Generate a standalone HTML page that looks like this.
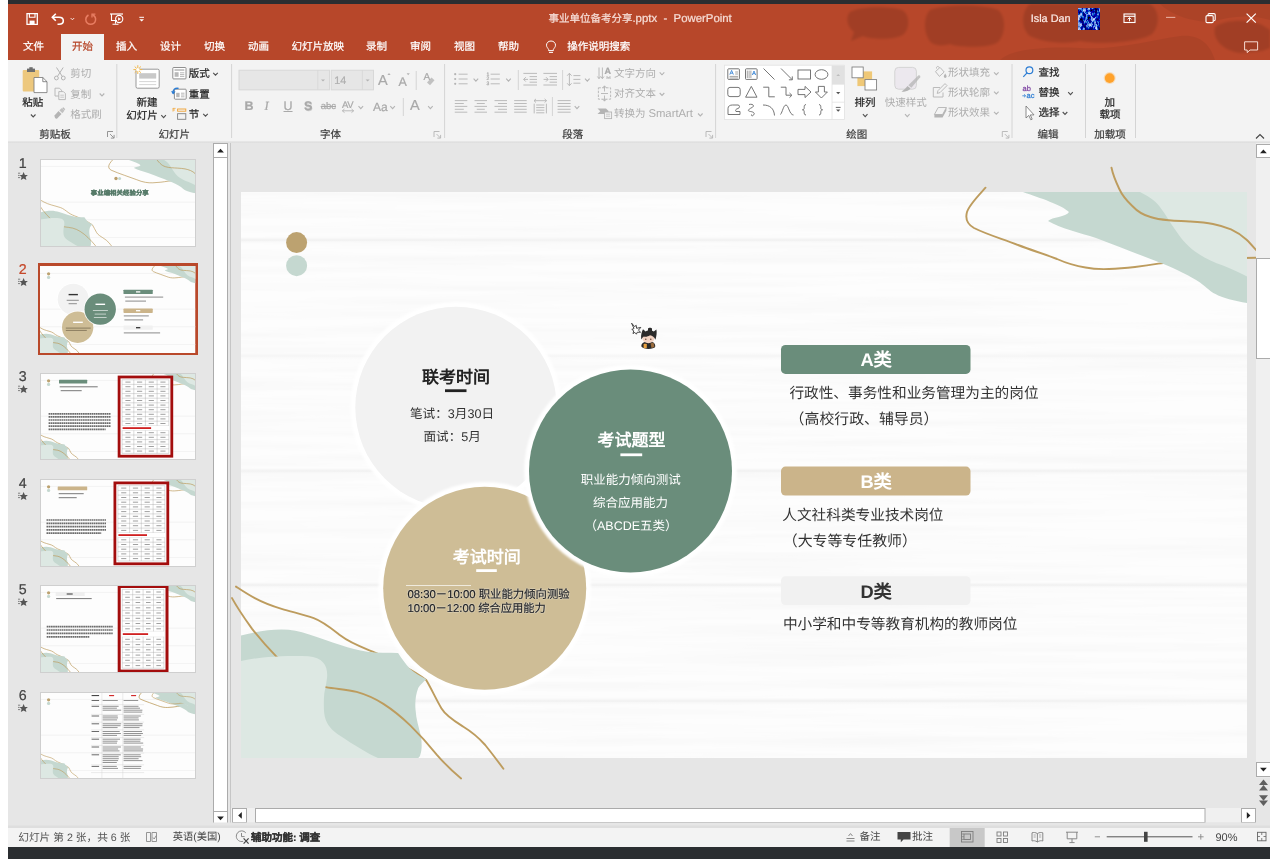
<!DOCTYPE html>
<html lang="zh-CN">
<head>
<meta charset="utf-8">
<title>事业单位备考分享.pptx - PowerPoint</title>
<style>
html,body{margin:0;padding:0}
body{width:1270px;height:859px;position:relative;overflow:hidden;background:#fff;font-family:"Liberation Sans",sans-serif;font-size:10.5px;color:#262626;text-rendering:geometricPrecision}
.a{position:absolute}
.t{position:absolute;white-space:nowrap;line-height:12px;height:12px;-webkit-text-stroke:0.22px currentColor}
.ns{-webkit-text-stroke:0 transparent}
.g{color:#adadad;-webkit-text-stroke:0 transparent}
.w{color:#fff}
svg{position:absolute;overflow:visible}
.sep{position:absolute;width:1px;background:#d2d2d2;top:64px;height:74px}
.gl{position:absolute;white-space:nowrap;line-height:12px;top:129px;color:#3c3c3c;-webkit-text-stroke:0.2px currentColor}
.st{position:absolute;white-space:nowrap;line-height:16px;color:#333;font-size:14.66px}
</style>
</head>
<body>
<div id="root" style="position:absolute;left:0;top:0;width:1270px;height:859px;will-change:transform">
<!-- window frame -->
<div class="a" style="left:8px;top:0;width:1262px;height:4px;background:#2b2e31"></div>
<div class="a" id="titlebar" style="left:8px;top:4px;width:1262px;height:56px;background:#b7472a;overflow:hidden">
<svg width="1262" height="56" viewBox="8 4 1262 56" style="left:0;top:0">
<g fill="#000" opacity=".115" style="filter:blur(1px)">
<path d="M850,12 C860,6 890,6 902,10 C910,14 910,28 904,34 C896,40 872,40 863,36 L851,41 L854,32 C846,26 846,16 850,12Z"/>
<path d="M930,10 C945,4 985,4 998,10 C1006,16 1006,34 998,42 C990,48 960,48 950,44 C940,47 932,45 929,40 C923,30 924,16 930,10Z"/>
<path d="M1030,4 L1150,4 C1160,10 1160,26 1152,34 C1140,42 1100,45 1080,41 C1060,45 1040,41 1030,36 C1020,28 1022,10 1030,4Z"/>
<path d="M1215,27 C1225,19 1250,19 1262,25 L1270,30 L1270,48 L1262,51 L1240,53 C1225,51 1212,41 1215,27Z"/>
</g>
<g fill="#000" opacity=".05">
<path d="M1000,60 C1010,50 1040,46 1080,48 C1120,50 1150,40 1180,36 C1200,34 1210,44 1215,60Z"/>
<path d="M1160,4 L1270,4 L1270,20 C1250,14 1230,16 1212,22 C1190,22 1170,14 1160,4Z"/>
</g>
</svg>
</div>
<div class="a" id="ribbon" style="left:8px;top:60px;width:1262px;height:82px;background:#f3f3f3"></div>
<div class="a" style="left:8px;top:141px;width:1262px;height:2px;background:linear-gradient(#e9e9e9,#dcdcdc)"></div>
<div class="a" id="work" style="left:8px;top:143px;width:1262px;height:685px;background:#e6e6e6"></div>
<div class="a" id="status" style="left:8px;top:828px;width:1262px;height:19px;background:#f3f3f3"></div>
<div class="a" style="left:8px;top:847px;width:1262px;height:12px;background:#2b2e31"></div>

<!--TITLEBAR_START-->
<!-- quick access -->
<svg style="left:26px;top:13px" width="120" height="12" viewBox="0 0 120 12">
<g fill="none" stroke="#fff" stroke-width="1.3">
<path d="M1,0.7H11.3V11.3H1Z"/><path d="M3.4,0.7V4.3H9V0.7" stroke-width="1.1"/><rect x="3.6" y="7.6" width="5" height="3.7" fill="#fff" stroke="none"/>
<path d="M26.5,4.3H33 C36.5,4.3 37.3,6.6 37.3,7.8 C37.3,9.6 36,11.3 33,11.3 H31.5" stroke-width="1.6"/><path d="M29.8,0.8L26.3,4.3L29.8,7.8" stroke-width="1.6"/>
<path d="M44.6,5L46.4,6.8L48.2,5" stroke-width="1" opacity=".85"/>
<path d="M66.5,1.5 C68.8,3 70,5 69.5,7.4 C69,9.8 67,11.3 64.7,11.3 C62,11.3 59.8,9.3 59.8,6.5 C59.800,4.5 60.800,3 62.500,2" stroke="#e87d62" stroke-width="1.5"/><path d="M66,4.600V1.2H69.400" stroke="#e87d62" stroke-width="1.3"/>
<path d="M84,1H97" stroke-width="1.200"/><path d="M85.500,1V7.500H91" stroke-width="1.1"/><circle cx="93.200" cy="6" r="3.600" stroke-width="1.100"/><path d="M92.100,4.300V7.700L95,6Z" fill="#fff" stroke="none"/><path d="M89.500,8V10.500M86.500,11.200H92.500" stroke-width="1.100"/>
<path d="M113.300,4.300H118" stroke-width="1"/><path d="M113.300,6.200H118L115.650,8.600Z" fill="#fff" stroke="none"/>
</g></svg>
<div class="t" style="left:548.4px;top:12.5px;color:#f6ddd6;font-size:10.500px">事业单位备考分享<span style="font-size:11.4px">.pptx&nbsp; -&nbsp; PowerPoint</span></div>
<div class="t" style="left:1030.7px;top:12.6px;color:#fbe9e4;font-size:10.900px">Isla Dan</div>
<!-- avatar -->
<svg style="left:1078px;top:8px;overflow:hidden" width="22" height="22" viewBox="0 0 22 22"><defs><filter id="av" x="0" y="0" width="100%" height="100%"><feTurbulence type="fractalNoise" baseFrequency="0.3 0.2" numOctaves="3" seed="7"/><feColorMatrix type="matrix" values="3 0 0 0 -1.6  3 0 0 0 -1.45  2.6 0 0 0 -0.74  0 0 0 0 1"/></filter></defs><rect width="22" height="22" fill="#1f37a8"/><rect width="22" height="22" filter="url(#av)" opacity=".95"/></svg>
<!-- window buttons -->
<svg style="left:1123px;top:13px" width="140" height="42" viewBox="1123 13 140 42">
<g fill="none" stroke="#fff" stroke-width="1.100">
<rect x="1124" y="14" width="11" height="8.500"/><path d="M1124,16.300H1135" /><path d="M1129.500,21.300V17.800M1127.600,19.400L1129.500,17.600L1131.400,19.400" stroke-width="1"/>
<path d="M1166,17.400H1175.300" stroke="#e6ab9b"/>
<rect x="1206" y="15.600" width="7.200" height="7" rx="1.200"/><path d="M1208,15.400V14.700Q1208,13.600 1209.100,13.600H1214Q1215.200,13.600 1215.200,14.800V19.600Q1215.200,20.700 1214,20.700H1213.400"/>
<path d="M1246.600,13.600L1255.800,22.600M1255.800,13.600L1246.600,22.600" stroke-width="1.200"/>
<path d="M1244.600,41.800H1257.600V50H1250L1247.200,52.600V50H1244.600Z" stroke="#f7d9d0" stroke-width="1"/>
</g></svg>
<!-- tabs -->
<div class="a" style="left:61px;top:34px;width:43px;height:26px;background:#f3f3f3"></div>
<div class="t w" style="left:23px;top:41px">文件</div>
<div class="t" style="left:72px;top:41px;color:#b7472a">开始</div>
<div class="t w" style="left:116px;top:41px">插入</div>
<div class="t w" style="left:160px;top:41px">设计</div>
<div class="t w" style="left:204px;top:41px">切换</div>
<div class="t w" style="left:248px;top:41px">动画</div>
<div class="t w" style="left:291.500px;top:41px">幻灯片放映</div>
<div class="t w" style="left:366px;top:41px">录制</div>
<div class="t w" style="left:410px;top:41px">审阅</div>
<div class="t w" style="left:454px;top:41px">视图</div>
<div class="t w" style="left:498px;top:41px">帮助</div>
<svg style="left:545px;top:40px" width="12" height="14" viewBox="0 0 12 14"><path d="M6,1 C3.200,1 1.500,3 1.500,5.200 C1.500,7 2.800,8 3.600,9.400 V10.600 H8.400 V9.400 C9.200,8 10.500,7 10.500,5.200 C10.500,3 8.800,1 6,1 Z M4,12.400H8" fill="none" stroke="#fff" stroke-width="1"/></svg>
<div class="t w" style="left:567.300px;top:41px">操作说明搜索</div>
<!--TITLEBAR_END-->
<!--RIBBON_START-->
<svg style="left:8px;top:60px" width="1262" height="82" viewBox="8 60 1262 82">
<g>
<rect x="22.7" y="70" width="16.5" height="21.5" rx="1" fill="#edc87e"/>
<rect x="27" y="68.6" width="8" height="3.4" fill="#6e6e6e"/><rect x="29.3" y="67.2" width="3.4" height="2.4" fill="#6e6e6e"/>
<path d="M34,77.500H42.800L47,81.700V92.600H34Z" fill="#fff" stroke="#7c7c7c" stroke-width="0.85"/><path d="M42.800,77.500V81.700H47" fill="none" stroke="#6e6e6e" stroke-width="0.8"/>
</g>
<path d="M30.9,114.5L33.2,116.9L35.5,114.5" fill="none" stroke="#505050" stroke-width="1.1"/>
<g fill="none" stroke="#b4b4b4" stroke-width="1"><path d="M56.5,67.500L62.300,76.500M63.200,67.500L57.400,76.500"/><circle cx="56.400" cy="78" r="1.900"/><circle cx="63.300" cy="78" r="1.900"/></g>
<g fill="#f3f3f3" stroke="#b4b4b4" stroke-width="0.9"><path d="M55,88.200H59.500L61.500,90.200V96H55Z"/><path d="M58.800,91.600H63.400L65.400,93.600V99.600H58.800Z"/><path d="M60.300,95.200H63.900M60.300,97.200H63.900" stroke-width="0.7"/></g>
<path d="M99.7,93.5L102.0,95.9L104.3,93.5" fill="none" stroke="#b4b4b4" stroke-width="1.1"/>
<g fill="#b4b4b4"><path d="M54.500,115.500L58.500,111L61.500,114L57.200,118.500C56,119.200 54.500,118.200 54.500,115.500Z"/><path d="M59.300,110.200L62,108L64.500,110.600L62.400,113.300Z" opacity=".8"/><path d="M62.800,107.600L64.800,109.600" stroke="#b4b4b4" stroke-width="1.200"/></g>
<path d="M107.5,137.0V131.5H113.0M110.1,134.1L113.8,137.8M114.1,134.9V138.1H110.9" fill="none" stroke="#8a8a8a" stroke-width="0.9"/>
<path d="M116.8,64V138" stroke="#d4d4d4" stroke-width="1"/>
<g>
<rect x="136" y="69.200" width="23.200" height="19" rx="1.500" fill="#fff" stroke="#808080" stroke-width="0.8"/>
<rect x="139.200" y="73.200" width="17" height="5.400" fill="#c8c8c8"/><path d="M139.200,81.600H156.200M139.200,84.600H156.200" stroke="#d0d0d0" stroke-width="0.9"/>
<path d="M137.800,65.200V74M133.400,69.600H142.200M134.700,66.500L140.900,72.700M140.900,66.500L134.700,72.700" stroke="#f2b84a" stroke-width="1"/><circle cx="137.800" cy="69.600" r="1.700" fill="#fff"/><rect x="133" y="64.500" width="4.800" height="4.300" fill="none"/>
</g>
<path d="M161.3,115.2L163.6,117.6L165.9,115.2" fill="none" stroke="#505050" stroke-width="1.1"/>
<g><rect x="172.800" y="67.500" width="13.200" height="11.400" rx="0.800" fill="#fff" stroke="#7c7c7c" stroke-width="0.85"/><path d="M174.500,70H184.300" stroke="#7c7c7c" stroke-width="0.85"/><rect x="174.600" y="72.200" width="4" height="4.600" fill="#b8b8b8"/><path d="M180,72.800H184.300M180,74.600H184.300M180,76.400H184.300" stroke="#9a9a9a" stroke-width="0.7"/></g>
<path d="M213.2,72.8L215.5,75.2L217.8,72.8" fill="none" stroke="#505050" stroke-width="1.1"/>
<g><rect x="174.400" y="89.200" width="11.800" height="10" rx="0.800" fill="#fff" stroke="#7c7c7c" stroke-width="0.85"/><rect x="176.200" y="92.800" width="3.400" height="4.400" fill="#b8b8b8"/><path d="M181,93.200H184.500M181,95H184.500M181,96.800H184.500" stroke="#9a9a9a" stroke-width="0.7"/><path d="M173,93.500C172.500,90 175,87.600 178.600,88.400" fill="none" stroke="#2b7cd3" stroke-width="1.300"/><path d="M171,91.300L173.200,94.400L175.600,91.600Z" fill="#2b7cd3"/></g>
<g fill="none"><path d="M173,108V111.600M173,108.400H175.600M173,110H175" stroke="#f0a840" stroke-width="0.8"/><rect x="177.600" y="109" width="8.200" height="2.200" stroke="#f0a030" stroke-width="0.9"/><rect x="177.600" y="113.700" width="8.200" height="5.600" stroke="#808080" stroke-width="0.9"/></g>
<path d="M203.2,113.8L205.5,116.2L207.8,113.8" fill="none" stroke="#505050" stroke-width="1.1"/>
<path d="M231.6,64V138" stroke="#d4d4d4" stroke-width="1"/>
<g><rect x="239" y="70.200" width="90.500" height="19.700" fill="#e6e6e6" stroke="#d6d6d6" stroke-width="0.9"/><path d="M317.800,70.200V89.900" stroke="#d6d6d6" stroke-width="0.8"/><path d="M321,79.400H325L323,81.600Z" fill="#b4b4b4"/>
<rect x="331.200" y="70.200" width="42.300" height="19.700" fill="#e6e6e6" stroke="#d6d6d6" stroke-width="0.9"/><path d="M362.400,70.200V89.900" stroke="#d6d6d6" stroke-width="0.8"/><path d="M365.600,79.400H369.600L367.600,81.600Z" fill="#b4b4b4"/></g>
<path d="M387.400,75L389,73L390.600,75Z" fill="#b4b4b4"/>
<path d="M406.600,73.300L408.200,75.300L409.800,73.300Z" fill="#b4b4b4"/>
<path d="M416.2,71V90" stroke="#d4d4d4" stroke-width="1"/>
<path d="M427,82.500L431.500,77.500L434.500,80.200L430,85.200Z" fill="#b4b4b4" opacity=".8"/>
<path d="M342.500,110.800H353.500M344.500,109L342.300,110.800L344.500,112.600M351.500,109L353.700,110.800L351.500,112.600" fill="none" stroke="#b4b4b4" stroke-width="0.9"/>
<path d="M358.5,106.2L360.8,108.6L363.1,106.2" fill="none" stroke="#b4b4b4" stroke-width="1.1"/>
<path d="M390.3,106.2L392.6,108.6L394.9,106.2" fill="none" stroke="#b4b4b4" stroke-width="1.1"/>
<path d="M403.3,98V116" stroke="#d4d4d4" stroke-width="1"/>
<path d="M428.1,106.2L430.4,108.6L432.7,106.2" fill="none" stroke="#b4b4b4" stroke-width="1.1"/>
<path d="M434,137.0V131.5H439.5M436.6,134.1L440.3,137.8M440.6,134.9V138.1H437.4" fill="none" stroke="#b4b4b4" stroke-width="0.9"/>
<path d="M444.6,64V138" stroke="#d4d4d4" stroke-width="1"/>
<circle cx="455.200" cy="74.2" r="1.100" fill="#b4b4b4"/>
<circle cx="455.200" cy="79.0" r="1.100" fill="#b4b4b4"/>
<circle cx="455.200" cy="83.8" r="1.100" fill="#b4b4b4"/>
<path d="M458.6,74.2H467.6M458.6,79.0H467.6M458.6,83.8H467.6" stroke="#b4b4b4" stroke-width="0.9" fill="none"/>
<path d="M473.6,78.7L475.9,81.1L478.2,78.7" fill="none" stroke="#b4b4b4" stroke-width="1.1"/>
<path d="M490.6,74.2H499.8M490.6,79.0H499.8M490.6,83.8H499.8" stroke="#b4b4b4" stroke-width="0.9" fill="none"/>
<path d="M506.2,78.7L508.5,81.1L510.8,78.7" fill="none" stroke="#b4b4b4" stroke-width="1.1"/>
<path d="M518.3,70V90" stroke="#d4d4d4" stroke-width="1"/>
<path d="M523.4,73.4H537.0" stroke="#b4b4b4" stroke-width="0.9" fill="none"/>
<path d="M529.6,76.6H537.0M529.6,79.4H537.0M529.6,82.2H537.0" stroke="#b4b4b4" stroke-width="0.9" fill="none"/>
<path d="M523.4,85.0H537.0" stroke="#b4b4b4" stroke-width="0.9" fill="none"/>
<path d="M528,79.400H523.800M525.800,77.200L523.600,79.400L525.800,81.600" fill="none" stroke="#b4b4b4" stroke-width="0.9"/>
<path d="M543.4,73.4H557.0" stroke="#b4b4b4" stroke-width="0.9" fill="none"/>
<path d="M549.6,76.6H557.0M549.6,79.4H557.0M549.6,82.2H557.0" stroke="#b4b4b4" stroke-width="0.9" fill="none"/>
<path d="M543.4,85.0H557.0" stroke="#b4b4b4" stroke-width="0.9" fill="none"/>
<path d="M543.600,79.400H548M546,77.200L548.200,79.400L546,81.600" fill="none" stroke="#b4b4b4" stroke-width="0.9"/>
<path d="M562.6,70V90" stroke="#d4d4d4" stroke-width="1"/>
<path d="M569.400,73.500V85.500M567.200,75.700L569.400,73.300L571.600,75.700M567.200,83.300L569.400,85.700L571.600,83.300" fill="none" stroke="#b4b4b4" stroke-width="0.9"/>
<path d="M573.4,75.6H580.4M573.4,79.4H580.4M573.4,83.2H580.4" stroke="#b4b4b4" stroke-width="0.9" fill="none"/>
<path d="M585.0,78.7L587.3,81.1L589.6,78.7" fill="none" stroke="#b4b4b4" stroke-width="1.1"/>
<path d="M454.8,100.6H467.3M454.8,103.5H463.8M454.8,106.4H467.3M454.8,109.3H463.8M454.8,112.2H467.3" stroke="#b4b4b4" stroke-width="0.9" fill="none"/>
<path d="M474.5,100.6H487.0M476.8,103.5H484.8M474.5,106.4H487.0M476.8,109.3H484.8M474.5,112.2H487.0" stroke="#b4b4b4" stroke-width="0.9" fill="none"/>
<path d="M494.5,100.6H507.0M498.0,103.5H507.0M494.5,106.4H507.0M498.0,109.3H507.0M494.5,112.2H507.0" stroke="#b4b4b4" stroke-width="0.9" fill="none"/>
<path d="M514.2,100.6H526.7M514.2,103.5H526.7M514.2,106.4H526.7M514.2,109.3H526.7M514.2,112.2H526.7" stroke="#b4b4b4" stroke-width="0.9" fill="none"/>
<path d="M534.200,100.700H546.400M536,98.900L534,100.700L536,102.500M544.600,98.900L546.600,100.700L544.600,102.500" fill="none" stroke="#b4b4b4" stroke-width="0.9"/>
<path d="M534.200,103.700V113.400M546.400,103.700V113.400" stroke="#b4b4b4" stroke-width="0.9"/>
<path d="M536.2,105.0H544.4M536.2,107.6H544.4M536.2,110.2H544.4M536.2,112.8H544.4" stroke="#b4b4b4" stroke-width="0.9" fill="none"/>
<path d="M552.4,97V116" stroke="#d4d4d4" stroke-width="1"/>
<path d="M557.6,100.6H570.6M557.6,103.5H570.6M557.6,106.4H570.6M557.6,109.3H570.6M557.6,112.2H570.6" stroke="#b4b4b4" stroke-width="0.9" fill="none"/>
<path d="M574.7,106.2L577.0,108.6L579.3,106.2" fill="none" stroke="#b4b4b4" stroke-width="1.1"/>
<path d="M599,67.500V78.500M602.400,67.500V78.500M597.400,76.500L599,78.700L600.600,76.500M600.800,76.500L602.400,78.700L604,76.500M606,78H611M606.600,76L608.500,78.200L610.400,76" fill="none" stroke="#b4b4b4" stroke-width="0.9"/>
<path d="M659.7,72.4L662.0,74.8L664.3,72.4" fill="none" stroke="#b4b4b4" stroke-width="1.1"/>
<g fill="none" stroke="#b4b4b4" stroke-width="0.9"><rect x="598.400" y="87.800" width="12.200" height="11.400" stroke-dasharray="2.5 1.3"/><path d="M604.500,86V91.500M602.600,88L604.500,85.800L606.400,88M604.500,101V95.500M602.600,99L604.500,101.200L606.400,99M601,93.500H608"/></g>
<path d="M659.7,93.0L662.0,95.4L664.3,93.0" fill="none" stroke="#b4b4b4" stroke-width="1.1"/>
<g><path d="M597.500,108.500H606L608.800,111.300L606,114H597.500L600.300,111.300Z" fill="#b4b4b4"/><rect x="604.600" y="112" width="7" height="6.600" fill="#f3f3f3" stroke="#b4b4b4" stroke-width="0.9"/><path d="M606,114.200H610.200M606,116.200H610.200" stroke="#b4b4b4" stroke-width="0.7"/></g>
<path d="M698.0,113.5L700.3,115.9L702.6,113.5" fill="none" stroke="#b4b4b4" stroke-width="1.1"/>
<path d="M706,137.0V131.5H711.5M708.6,134.1L712.3,137.8M712.6,134.9V138.1H709.4" fill="none" stroke="#b4b4b4" stroke-width="0.9"/>
<path d="M715.6,64V138" stroke="#d4d4d4" stroke-width="1"/>
<rect x="724.600" y="65.200" width="120" height="54.200" fill="#fff" stroke="#e2e2e2" stroke-width="0.8"/>
<rect x="832" y="65.600" width="12.300" height="18.600" fill="#e1e1e1"/><path d="M832,84.200H844.300M832,102.200H844.300M832,65.600V119.200" stroke="#e2e2e2" stroke-width="0.8" fill="none"/>
<path d="M836.300,76L838.200,74L840.100,76Z" fill="#bdbdbd"/><path d="M836.100,92L838.200,94.300L840.300,92Z" fill="#555"/><path d="M835.800,107.400H840.600" stroke="#555" stroke-width="0.9"/><path d="M836,109.400L838.200,111.800L840.400,109.400Z" fill="#555"/>
<g fill="none" stroke="#666" stroke-width="0.9">
<rect x="727.800" y="68.800" width="11.600" height="10.600" rx="0.800"/><path d="M735.200,72H738M735.200,74H738M729.600,76.400H738M729.600,78H738" stroke-width="0.6"/>
<rect x="745.500" y="68.800" width="11.600" height="10.600" rx="0.800"/><path d="M747.300,70.600V78M749.100,70.600V78M750.900,70.600V78" stroke-width="0.6"/>
<path d="M763.500,68.500L774.500,79.500"/>
<path d="M781,68.500L792,79.500M792.300,76.400V79.800H788.900" />
<rect x="798" y="70" width="12.500" height="9"/>
<ellipse cx="821.500" cy="74.500" rx="6.400" ry="4.800"/>
<rect x="727.800" y="87.400" width="12.400" height="9.200" rx="2.200"/>
<path d="M751.300,86.400L745.600,97.200H757Z"/>
<path d="M763.200,87.200H768.800V96.800H774.800"/>
<path d="M780.800,87.200H786V95.200H791.500M789.500,93L791.900,95.300L789.500,97.600"/>
<path d="M798,89.400H805V86.400L811,92L805,97.600V94.600H798Z"/>
<path d="M818.400,86.400H824.400V92H827.400L821.400,98L815.400,92H818.400Z"/>
<path d="M728,114.500V108.500C728,106 730,105 732.500,105H738C740,105 740,108 738,108.500C736,109 735,110 736,111.500H740V114.500Z"/>
<path d="M749,104.500C753,103.500 755,106 752,107.500C748,109.500 747,111 750.500,111.500C754,112 755.500,113.500 753,115.500C752,116.300 751,115.500 751.500,114.500"/>
<path d="M763,105C770,105 774,108.500 774.500,115.500"/>
<path d="M780.500,114.500C782.500,112 783.500,105 786,105C788.500,105 789.500,115 793.500,115"/>
</g>
<g fill="none" stroke="#666" stroke-width="0.9"><path d="M806,104.600C804,104.600 804.200,106.400 804.200,107.800C804.200,109.200 803.600,109.800 802.400,109.800C803.600,109.800 804.200,110.400 804.200,111.800C804.200,113.200 804,115 806,115"/><path d="M819,104.600C821,104.600 820.800,106.400 820.800,107.800C820.800,109.200 821.400,109.800 822.600,109.800C821.400,109.800 820.800,110.400 820.800,111.800C820.800,113.200 821,115 819,115"/></g>
<path d="M729.800,74.600L731.600,70.400L733.400,74.600M730.500,73.200H732.700" fill="none" stroke="#2b7cd3" stroke-width="0.8"/><path d="M752.300,75L754,71L755.700,75M753,73.700H755" fill="none" stroke="#2b7cd3" stroke-width="0.8"/>
<g><rect x="857.400" y="71.400" width="14.700" height="14.700" fill="#efc877"/><rect x="852" y="67" width="11.200" height="10.800" fill="#fff" stroke="#7c7c7c" stroke-width="0.85"/><rect x="865" y="79.600" width="11.600" height="10.400" fill="#fff" stroke="#7c7c7c" stroke-width="0.85"/></g>
<path d="M862.9,114.2L865.2,116.6L867.5,114.2" fill="none" stroke="#505050" stroke-width="1.1"/>
<g><rect x="894.800" y="67.400" width="21.600" height="21.800" rx="3.800" fill="#ece8ee" stroke="#d0d0d0" stroke-width="0.9"/><path d="M901.500,91.400C903.500,90.500 905.500,88.500 907.500,86L910.600,88.600C908.500,91 905.500,92.300 901.500,91.400Z" fill="#b4b4b4"/><path d="M908.300,85.200L911.400,87.800L920.200,77.200C920.800,76 919.400,74.800 918.300,75.600Z" fill="#b4b4b4" opacity=".75"/></g>
<path d="M905.0,114.2L907.3,116.6L909.6,114.2" fill="none" stroke="#b4b4b4" stroke-width="1.1"/>
<g fill="none" stroke="#b4b4b4" stroke-width="0.9"><path d="M935.500,71.600L940,67.400L944.200,72L939.400,76.400Z"/><path d="M936.500,68.500C936,66.500 938.500,65.500 939,67.500"/><path d="M945.200,73.600C945.200,73.600 943.800,75.600 943.800,76.600C943.800,78.400 946.600,78.400 946.600,76.600C946.600,75.600 945.200,73.600 945.200,73.600Z" fill="#b4b4b4" stroke="none"/></g>
<path d="M994.0,72.3L996.3,74.7L998.6,72.3" fill="none" stroke="#b4b4b4" stroke-width="1.1"/>
<g fill="none" stroke="#b4b4b4" stroke-width="0.9"><path d="M940,87.500H933.300V97H943V92.500"/><path d="M937.200,93.400L938,90.600L945,83.600L947,85.600L940,92.600Z"/></g>
<path d="M994.0,91.6L996.3,94.0L998.6,91.6" fill="none" stroke="#b4b4b4" stroke-width="1.1"/>
<g><path d="M934.400,114.500L938.200,107.500H946.400L942.600,114.500Z" fill="#f3f3f3" stroke="#b4b4b4" stroke-width="0.9"/><path d="M934.400,114.500H942.600L946.400,107.500V110.500L942.600,117.500H934.400Z" fill="#b4b4b4"/></g>
<path d="M994.0,111.8L996.3,114.2L998.6,111.8" fill="none" stroke="#b4b4b4" stroke-width="1.1"/>
<path d="M1002.3,137.0V131.5H1007.8M1004.9,134.1L1008.5999999999999,137.8M1008.9,134.9V138.1H1005.6999999999999" fill="none" stroke="#b4b4b4" stroke-width="0.9"/>
<path d="M1012,64V138" stroke="#d4d4d4" stroke-width="1"/>
<g fill="none" stroke="#2b7cd3" stroke-width="1.200"><circle cx="1029.400" cy="70.300" r="3.400"/><path d="M1027,72.800L1023.300,76.800"/></g>
<path d="M1022.300,95.800H1025.400M1024,94.300L1025.600,95.800L1024,97.300" fill="none" stroke="#2b7cd3" stroke-width="0.8"/>
<path d="M1068.2,92.2L1070.5,94.6L1072.8,92.2" fill="none" stroke="#505050" stroke-width="1.1"/>
<path d="M1026,106V118L1028.800,115.400L1030.800,119.800L1032.200,119.200L1030.300,114.900H1034Z" fill="#fff" stroke="#6e6e6e" stroke-width="0.8"/>
<path d="M1062.7,112.0L1065.0,114.4L1067.3,112.0" fill="none" stroke="#505050" stroke-width="1.1"/>
<path d="M1085.5,64V138" stroke="#d4d4d4" stroke-width="1"/>
<circle cx="1109.700" cy="78.100" r="4.900" fill="#ff9a1a"/><circle cx="1109.700" cy="78.100" r="6" fill="#ffb24d" opacity=".35"/>
<path d="M1135.5,64V138" stroke="#d4d4d4" stroke-width="1"/>
<path d="M1256,138.500L1260,134.500L1264,138.500" fill="none" stroke="#444" stroke-width="1.100"/>
</svg>
<div class="t " style="left:22.3px;top:97.0px;">粘贴</div>
<div class="t g" style="left:70.3px;top:68.0px;">剪切</div>
<div class="t g" style="left:70.3px;top:88.5px;">复制</div>
<div class="t g" style="left:70.3px;top:108.9px;">格式刷</div>
<div class="gl" style="left:39.3px">剪贴板</div>
<div class="t " style="left:136.5px;top:96.6px;">新建</div>
<div class="t " style="left:126.3px;top:110.2px;">幻灯片</div>
<div class="t " style="left:188.7px;top:68.0px;">版式</div>
<div class="t " style="left:188.7px;top:88.5px;">重置</div>
<div class="t " style="left:188.7px;top:108.9px;">节</div>
<div class="gl" style="left:158.4px">幻灯片</div>
<div class="t" style="left:334.3px;top:74.6px;color:#b0b0b0;font-size:10.800px">14</div>
<div class="t" style="left:378px;top:73.300px;color:#a9a9a9;font-size:14.500px;line-height:16px;height:16px">A</div>
<div class="t" style="left:398.500px;top:74.500px;color:#a9a9a9;font-size:12.500px;line-height:14px;height:14px">A</div>
<div class="t" style="left:423.500px;top:72px;color:#a9a9a9;font-size:10px">A</div>
<div class="t" style="left:244.500px;top:99.400px;color:#a9a9a9;font-size:12.500px;font-weight:bold;line-height:14px;height:14px">B</div>
<div class="t" style="left:264.500px;top:99.400px;color:#a9a9a9;font-size:12.500px;font-style:italic;line-height:14px;height:14px;font-family:'Liberation Serif',serif">I</div>
<div class="t" style="left:283.500px;top:99.400px;color:#a9a9a9;font-size:12.500px;line-height:14px;height:14px;text-decoration:underline">U</div>
<div class="t" style="left:304px;top:99.400px;color:#a9a9a9;font-size:12.500px;font-weight:bold;line-height:14px;height:14px;text-shadow:0.6px 0.6px 0 #ccc">S</div>
<div class="t" style="left:320.700px;top:101.400px;color:#a9a9a9;font-size:9.500px;text-decoration:line-through">abc</div>
<div class="t" style="left:342px;top:99.700px;color:#a9a9a9;font-size:9.500px;letter-spacing:-0.5px">AV</div>
<div class="t" style="left:373px;top:100px;color:#a9a9a9;font-size:12px;line-height:14px;height:14px">Aa</div>
<div class="t" style="left:410px;top:97.500px;color:#a9a9a9;font-size:14.500px;line-height:16px;height:16px">A</div>
<div class="gl" style="left:320px">字体</div>
<div class="t" style="left:486.500px;top:72.600px;color:#a9a9a9;font-size:5px;line-height:4.800px;height:15px;white-space:pre">1
2
3</div>
<div class="t" style="left:604.500px;top:64.500px;color:#a9a9a9;font-size:9px;font-weight:bold">A</div>
<div class="t g" style="left:614px;top:67.5px;">文字方向</div>
<div class="t g" style="left:614px;top:88.1px;">对齐文本</div>
<div class="t g" style="left:614px;top:107.900px">转换为 <span style="font-size:11.300px">SmartArt</span></div>
<div class="gl" style="left:562.2px">段落</div>
<div class="t " style="left:854.6px;top:96.9px;">排列</div>
<div class="t g" style="left:884.8px;top:96.9px;">快速样式</div>
<div class="t g" style="left:947.9px;top:67.4px;">形状填充</div>
<div class="t g" style="left:947.9px;top:86.7px;">形状轮廓</div>
<div class="t g" style="left:947.9px;top:106.9px;">形状效果</div>
<div class="gl" style="left:846.3px">绘图</div>
<div class="t " style="left:1038.5px;top:66.9px;">查找</div>
<div class="t" style="left:1022.500px;top:85.300px;font-size:7.500px;line-height:8px;height:8px;color:#7a3fa0">ab</div>
<div class="t" style="left:1026.500px;top:91.500px;font-size:7.500px;line-height:8px;height:8px;color:#2b7cd3">ac</div>
<div class="t " style="left:1038.5px;top:87.2px;">替换</div>
<div class="t " style="left:1038.5px;top:107.0px;">选择</div>
<div class="gl" style="left:1037.4px">编辑</div>
<div class="t " style="left:1104.6px;top:96.7px;">加</div>
<div class="t " style="left:1099.6px;top:109.2px;">载项</div>
<div class="gl" style="left:1094.300px">加载项</div>
<!--RIBBON_END-->
<!--THUMBS_START-->
<div class="t" style="left:18.800px;top:155.6px;font-size:14.200px;line-height:16px;height:16px;color:#444">1</div>
<svg style="left:17.600px;top:171.9px" width="10" height="8" viewBox="0 0 10 8"><path d="M0,1.200H2.200M0,3.400H1.600M0,5.600H2.200" stroke="#666" stroke-width="0.8" fill="none"/><path d="M5.600,0L6.900,2.900L9.900,3.100L7.600,5L8.400,8L5.600,6.400L2.800,8L3.600,5L1.600,3.100L4.300,2.900Z" fill="#555"/></svg>
<div class="t" style="left:18.800px;top:261.8px;font-size:14.200px;line-height:16px;height:16px;color:#c5482a">2</div>
<svg style="left:17.600px;top:278.1px" width="10" height="8" viewBox="0 0 10 8"><path d="M0,1.200H2.200M0,3.400H1.600M0,5.600H2.200" stroke="#666" stroke-width="0.8" fill="none"/><path d="M5.600,0L6.900,2.900L9.900,3.100L7.600,5L8.400,8L5.600,6.400L2.800,8L3.600,5L1.600,3.100L4.300,2.900Z" fill="#555"/></svg>
<div class="t" style="left:18.800px;top:368.8px;font-size:14.200px;line-height:16px;height:16px;color:#444">3</div>
<svg style="left:17.600px;top:385.1px" width="10" height="8" viewBox="0 0 10 8"><path d="M0,1.200H2.200M0,3.400H1.600M0,5.600H2.200" stroke="#666" stroke-width="0.8" fill="none"/><path d="M5.600,0L6.900,2.900L9.900,3.100L7.600,5L8.400,8L5.600,6.400L2.800,8L3.600,5L1.600,3.100L4.300,2.900Z" fill="#555"/></svg>
<div class="t" style="left:18.800px;top:475.6px;font-size:14.200px;line-height:16px;height:16px;color:#444">4</div>
<svg style="left:17.600px;top:491.9px" width="10" height="8" viewBox="0 0 10 8"><path d="M0,1.200H2.200M0,3.400H1.600M0,5.600H2.200" stroke="#666" stroke-width="0.8" fill="none"/><path d="M5.600,0L6.900,2.900L9.900,3.100L7.600,5L8.400,8L5.600,6.400L2.800,8L3.600,5L1.600,3.100L4.300,2.900Z" fill="#555"/></svg>
<div class="t" style="left:18.800px;top:581.7px;font-size:14.200px;line-height:16px;height:16px;color:#444">5</div>
<svg style="left:17.600px;top:598.0px" width="10" height="8" viewBox="0 0 10 8"><path d="M0,1.200H2.200M0,3.400H1.600M0,5.600H2.200" stroke="#666" stroke-width="0.8" fill="none"/><path d="M5.600,0L6.900,2.900L9.900,3.100L7.600,5L8.400,8L5.600,6.400L2.800,8L3.600,5L1.600,3.100L4.300,2.900Z" fill="#555"/></svg>
<div class="t" style="left:18.800px;top:687.9px;font-size:14.200px;line-height:16px;height:16px;color:#444">6</div>
<svg style="left:17.600px;top:704.2px" width="10" height="8" viewBox="0 0 10 8"><path d="M0,1.200H2.200M0,3.400H1.600M0,5.600H2.200" stroke="#666" stroke-width="0.8" fill="none"/><path d="M5.600,0L6.900,2.900L9.900,3.100L7.600,5L8.400,8L5.600,6.400L2.800,8L3.600,5L1.600,3.100L4.300,2.900Z" fill="#555"/></svg>
<div class="a" style="left:38.100px;top:263.300px;width:160.1px;height:92.1px;background:#b9492b"></div>
<svg style="left:40.3px;top:159.3px;outline:1px solid #cfcfcf;outline-offset:-1px;overflow:hidden" width="155.5" height="87.5" viewBox="0 0 155.5 87.5"><use href="#sl0" x="0" y="0" width="155.5" height="87.5"/><circle cx="76" cy="19.500" r="1.700" fill="#ba9e6c"/><circle cx="79.600" cy="19.500" r="1.500" fill="#c5d8d0"/></svg>
<div class="t" style="left:90.8px;top:190.3px;font-size:6.400px;line-height:8px;height:8px;color:#557a68;font-weight:bold;letter-spacing:0.05px">事业编相关经验分享</div>
<svg style="left:40.3px;top:265.5px;overflow:hidden" width="155.5" height="87.5" viewBox="0 0 155.5 87.5"><use href="#sl2" x="0" y="0" width="155.5" height="87.5"/><g fill="none"><path d="M28.6,28.6H37.9" stroke="#333" stroke-width="1.4" opacity="1"/><path d="M26.7,34.3H38.8" stroke="#666" stroke-width="0.7" opacity="1"/><path d="M28.6,37.7H36.9" stroke="#666" stroke-width="0.7" opacity="1"/><path d="M55.5,38.3H65.1" stroke="#fff" stroke-width="1.4" opacity="1"/><path d="M52.9,44.5H67.9" stroke="#fff" stroke-width="0.7" opacity="0.85"/><path d="M54.7,48.1H66.0" stroke="#fff" stroke-width="0.7" opacity="0.85"/><path d="M53.9,51.5H66.6" stroke="#fff" stroke-width="0.7" opacity="0.85"/><path d="M33.1,56.3H42.8" stroke="#fff" stroke-width="1.4" opacity="1"/><path d="M25.8,62.1H50.7" stroke="#6b6048" stroke-width="0.7" opacity="1"/><path d="M25.8,64.4H46.8" stroke="#6b6048" stroke-width="0.7" opacity="1"/><path d="M96.0,25.9H100.3" stroke="#fff" stroke-width="1.3" opacity="1"/><path d="M96.0,44.7H100.3" stroke="#fff" stroke-width="1.3" opacity="1"/><path d="M96.0,61.7H100.3" stroke="#333" stroke-width="1.3" opacity="1"/><path d="M84.9,31.1H123.2" stroke="#666" stroke-width="0.75" opacity="1"/><path d="M85.3,35.1H106.0" stroke="#666" stroke-width="0.75" opacity="1"/><path d="M83.8,49.9H108.8" stroke="#666" stroke-width="0.75" opacity="1"/><path d="M84.4,53.9H103.1" stroke="#666" stroke-width="0.75" opacity="1"/><path d="M83.8,66.9H120.1" stroke="#666" stroke-width="0.75" opacity="1"/></g></svg>
<svg style="left:40.3px;top:372.5px;outline:1px solid #cfcfcf;outline-offset:-1px;overflow:hidden" width="155.5" height="87.5" viewBox="0 0 155.5 87.5"><use href="#sl" x="0" y="0" width="155.5" height="87.5"/><rect x="19.0" y="6.8" width="28.200" height="3.800" rx="0.500" fill="#6a8d7b"/><path d="M19.7,13.8H57.7" stroke="#555" stroke-width="0.8" opacity="1"/><path d="M20.7,17.7H41.7" stroke="#555" stroke-width="0.8" opacity="1"/><path d="M8.6,40.8H70.6" stroke="#333" stroke-width="1.7" stroke-dasharray="1.7 0.45" opacity=".72"/><path d="M8.6,43.9H70.6" stroke="#333" stroke-width="1.7" stroke-dasharray="1.7 0.45" opacity=".72"/><path d="M8.6,47.0H70.6" stroke="#333" stroke-width="1.7" stroke-dasharray="1.7 0.45" opacity=".72"/><path d="M8.6,50.1H70.6" stroke="#333" stroke-width="1.7" stroke-dasharray="1.7 0.45" opacity=".72"/><path d="M8.6,53.2H70.6" stroke="#333" stroke-width="1.7" stroke-dasharray="1.7 0.45" opacity=".72"/><path d="M8.6,56.3H65.6" stroke="#333" stroke-width="1.7" stroke-dasharray="1.7 0.45" opacity=".72"/><rect x="77.7" y="2.6000000000000227" width="55.499999999999986" height="82.0" fill="#a30d0d"/><rect x="80.5" y="5.400000000000023" width="49.89999999999998" height="76.4" fill="#fff"/><path d="M82.1,6.8H128.8M82.1,11.4H128.8M82.1,16.0H128.8M82.1,20.6H128.8M82.1,25.2H128.8M82.1,29.8H128.8M82.1,34.4H128.8M82.1,39.0H128.8M82.1,43.6H128.8M82.1,48.2H128.8M82.1,52.8H128.8M82.1,57.4H128.8M82.1,62.0H128.8M82.1,66.6H128.8M82.1,71.2H128.8M82.1,75.8H128.8M82.1,80.4H128.8M82.1,6.8V80.4M93.8,6.8V80.4M105.4,6.8V80.4M117.1,6.8V80.4M128.8,6.8V80.4" stroke="#9a9a9a" stroke-width="0.35" fill="none"/><path d="M85.4,9.1H90.5M97.0,9.1H102.2M108.7,9.1H113.9M120.4,9.1H125.5M85.4,13.7H90.5M97.0,13.7H102.2M108.7,13.7H113.9M120.4,13.7H125.5M85.4,18.3H90.5M97.0,18.3H102.2M108.7,18.3H113.9M120.4,18.3H125.5M85.4,22.9H90.5M97.0,22.9H102.2M108.7,22.9H113.9M120.4,22.9H125.5M85.4,27.5H90.5M97.0,27.5H102.2M108.7,27.5H113.9M120.4,27.5H125.5M85.4,32.1H90.5M97.0,32.1H102.2M108.7,32.1H113.9M120.4,32.1H125.5M85.4,36.7H90.5M97.0,36.7H102.2M108.7,36.7H113.9M120.4,36.7H125.5M85.4,41.3H90.5M97.0,41.3H102.2M108.7,41.3H113.9M120.4,41.3H125.5M85.4,45.9H90.5M97.0,45.9H102.2M108.7,45.9H113.9M120.4,45.9H125.5M85.4,50.5H90.5M97.0,50.5H102.2M108.7,50.5H113.9M120.4,50.5H125.5M85.4,59.7H90.5M97.0,59.7H102.2M108.7,59.7H113.9M120.4,59.7H125.5M85.4,64.3H90.5M97.0,64.3H102.2M108.7,64.3H113.9M120.4,64.3H125.5M85.4,68.9H90.5M97.0,68.9H102.2M108.7,68.9H113.9M120.4,68.9H125.5M85.4,73.5H90.5M97.0,73.5H102.2M108.7,73.5H113.9M120.4,73.5H125.5M85.4,78.1H90.5M97.0,78.1H102.2M108.7,78.1H113.9M120.4,78.1H125.5" stroke="#777" stroke-width="0.7" fill="none"/><rect x="81.6" y="52.8" width="47.7" height="4.6" fill="#fff"/><path d="M82.6,55.1H111.1" stroke="#d02020" stroke-width="1.8"/></svg>
<svg style="left:40.3px;top:479.3px;outline:1px solid #cfcfcf;outline-offset:-1px;overflow:hidden" width="155.5" height="87.5" viewBox="0 0 155.5 87.5"><use href="#sl" x="0" y="0" width="155.5" height="87.5"/><rect x="17.7" y="7.5" width="29.500" height="3.800" rx="0.500" fill="#cbb48a"/><path d="M18.7,14.7H43.7" stroke="#555" stroke-width="0.8" opacity="1"/><path d="M18.7,18.7H36.7" stroke="#555" stroke-width="0.8" opacity="1"/><path d="M6.5,41.0H66.0" stroke="#333" stroke-width="1.7" stroke-dasharray="1.7 0.45" opacity=".72"/><path d="M6.5,44.3H66.0" stroke="#333" stroke-width="1.7" stroke-dasharray="1.7 0.45" opacity=".72"/><path d="M6.5,47.6H66.0" stroke="#333" stroke-width="1.7" stroke-dasharray="1.7 0.45" opacity=".72"/><path d="M6.5,50.9H66.0" stroke="#333" stroke-width="1.7" stroke-dasharray="1.7 0.45" opacity=".72"/><path d="M6.5,54.2H61.2" stroke="#333" stroke-width="1.7" stroke-dasharray="1.7 0.45" opacity=".72"/><rect x="73.5" y="2.5" width="55.69999999999999" height="83.69999999999999" fill="#a30d0d"/><rect x="76.3" y="5.3" width="50.099999999999994" height="78.1" fill="#fff"/><path d="M77.9,6.7H124.8M77.9,11.4H124.8M77.9,16.1H124.8M77.9,20.8H124.8M77.9,25.5H124.8M77.9,30.2H124.8M77.9,34.9H124.8M77.9,39.6H124.8M77.9,44.3H124.8M77.9,49.1H124.8M77.9,53.8H124.8M77.9,58.5H124.8M77.9,63.2H124.8M77.9,67.9H124.8M77.9,72.6H124.8M77.9,77.3H124.8M77.9,82.0H124.8M77.9,6.7V82.0M89.6,6.7V82.0M101.3,6.7V82.0M113.1,6.7V82.0M124.8,6.7V82.0" stroke="#9a9a9a" stroke-width="0.35" fill="none"/><path d="M81.2,9.1H86.3M92.9,9.1H98.1M104.6,9.1H109.8M116.4,9.1H121.5M81.2,13.8H86.3M92.9,13.8H98.1M104.6,13.8H109.8M116.4,13.8H121.5M81.2,18.5H86.3M92.9,18.5H98.1M104.6,18.5H109.8M116.4,18.5H121.5M81.2,23.2H86.3M92.9,23.2H98.1M104.6,23.2H109.8M116.4,23.2H121.5M81.2,27.9H86.3M92.9,27.9H98.1M104.6,27.9H109.8M116.4,27.9H121.5M81.2,32.6H86.3M92.9,32.6H98.1M104.6,32.6H109.8M116.4,32.6H121.5M81.2,37.3H86.3M92.9,37.3H98.1M104.6,37.3H109.8M116.4,37.3H121.5M81.2,42.0H86.3M92.9,42.0H98.1M104.6,42.0H109.8M116.4,42.0H121.5M81.2,46.7H86.3M92.9,46.7H98.1M104.6,46.7H109.8M116.4,46.7H121.5M81.2,51.4H86.3M92.9,51.4H98.1M104.6,51.4H109.8M116.4,51.4H121.5M81.2,60.8H86.3M92.9,60.8H98.1M104.6,60.8H109.8M116.4,60.8H121.5M81.2,65.5H86.3M92.9,65.5H98.1M104.6,65.5H109.8M116.4,65.5H121.5M81.2,70.2H86.3M92.9,70.2H98.1M104.6,70.2H109.8M116.4,70.2H121.5M81.2,74.9H86.3M92.9,74.9H98.1M104.6,74.9H109.8M116.4,74.9H121.5M81.2,79.6H86.3M92.9,79.6H98.1M104.6,79.6H109.8M116.4,79.6H121.5" stroke="#777" stroke-width="0.7" fill="none"/><rect x="77.4" y="53.8" width="47.9" height="4.7" fill="#fff"/><path d="M78.4,56.1H107.0" stroke="#d02020" stroke-width="1.8"/></svg>
<svg style="left:40.3px;top:585.4px;outline:1px solid #cfcfcf;outline-offset:-1px;overflow:hidden" width="155.5" height="87.5" viewBox="0 0 155.5 87.5"><use href="#sl" x="0" y="0" width="155.5" height="87.5"/><rect x="15.7" y="6.9" width="29" height="4.100" rx="0.500" fill="#efefef"/><path d="M26.7,9.0H32.7" stroke="#333" stroke-width="1.0" opacity="1"/><path d="M16.2,13.6H51.7" stroke="#555" stroke-width="0.8" opacity="1"/><path d="M6.7,41.6H72.7" stroke="#333" stroke-width="1.7" stroke-dasharray="1.7 0.45" opacity=".72"/><path d="M6.7,45.0H72.7" stroke="#333" stroke-width="1.7" stroke-dasharray="1.7 0.45" opacity=".72"/><path d="M6.7,48.4H72.7" stroke="#333" stroke-width="1.7" stroke-dasharray="1.7 0.45" opacity=".72"/><path d="M6.7,51.8H49.6" stroke="#333" stroke-width="1.7" stroke-dasharray="1.7 0.45" opacity=".72"/><rect x="77.7" y="0.0" width="50.8" height="87.60000000000002" fill="#a30d0d"/><rect x="80.7" y="3.0" width="44.8" height="81.60000000000002" fill="#fff"/><path d="M82.3,4.4H123.9M82.3,9.7H123.9M82.3,14.9H123.9M82.3,20.2H123.9M82.3,25.4H123.9M82.3,30.7H123.9M82.3,35.9H123.9M82.3,41.2H123.9M82.3,46.4H123.9M82.3,51.7H123.9M82.3,56.9H123.9M82.3,62.2H123.9M82.3,67.4H123.9M82.3,72.7H123.9M82.3,77.9H123.9M82.3,83.2H123.9M82.3,4.4V83.2M92.7,4.4V83.2M103.1,4.4V83.2M113.5,4.4V83.2M123.9,4.4V83.2" stroke="#9a9a9a" stroke-width="0.35" fill="none"/><path d="M85.2,7.0H89.8M95.6,7.0H100.2M106.0,7.0H110.6M116.4,7.0H121.0M85.2,12.3H89.8M95.6,12.3H100.2M106.0,12.3H110.6M116.4,12.3H121.0M85.2,17.5H89.8M95.6,17.5H100.2M106.0,17.5H110.6M116.4,17.5H121.0M85.2,22.8H89.8M95.6,22.8H100.2M106.0,22.8H110.6M116.4,22.8H121.0M85.2,28.0H89.8M95.6,28.0H100.2M106.0,28.0H110.6M116.4,28.0H121.0M85.2,33.3H89.8M95.6,33.3H100.2M106.0,33.3H110.6M116.4,33.3H121.0M85.2,38.5H89.8M95.6,38.5H100.2M106.0,38.5H110.6M116.4,38.5H121.0M85.2,43.8H89.8M95.6,43.8H100.2M106.0,43.8H110.6M116.4,43.8H121.0M85.2,54.3H89.8M95.6,54.3H100.2M106.0,54.3H110.6M116.4,54.3H121.0M85.2,59.6H89.8M95.6,59.6H100.2M106.0,59.6H110.6M116.4,59.6H121.0M85.2,64.8H89.8M95.6,64.8H100.2M106.0,64.8H110.6M116.4,64.8H121.0M85.2,70.1H89.8M95.6,70.1H100.2M106.0,70.1H110.6M116.4,70.1H121.0M85.2,75.3H89.8M95.6,75.3H100.2M106.0,75.3H110.6M116.4,75.3H121.0M85.2,80.6H89.8M95.6,80.6H100.2M106.0,80.6H110.6M116.4,80.6H121.0" stroke="#777" stroke-width="0.7" fill="none"/><rect x="81.8" y="46.4" width="42.6" height="5.3" fill="#fff"/><path d="M82.8,49.1H108.1" stroke="#d02020" stroke-width="1.8"/></svg>
<svg style="left:40.3px;top:691.6px;outline:1px solid #cfcfcf;outline-offset:-1px;overflow:hidden" width="155.5" height="87.5" viewBox="0 0 155.5 87.5"><use href="#sl6" x="0" y="0" width="155.5" height="87.5"/><g fill="none"><path d="M51.6,3.6H59.1" stroke="#333" stroke-width="1.0" opacity="1"/><path d="M69.1,3.6H74.1" stroke="#d02020" stroke-width="1.1" opacity="1"/><path d="M91.1,3.6H96.1" stroke="#d02020" stroke-width="1.1" opacity="1"/><path d="M51.6,8.5H59.1" stroke="#444" stroke-width="0.8" opacity="1"/><path d="M62.6,8.5H77.8" stroke="#666" stroke-width="0.7" opacity="1"/><path d="M83.6,8.5H98.2" stroke="#666" stroke-width="0.7" opacity="1"/><path d="M51.1,12.7H104.1" stroke="#c8c8c8" stroke-width="0.35" opacity="1"/><path d="M51.6,14.3H59.1" stroke="#444" stroke-width="0.8" opacity="1"/><path d="M62.6,14.3H78.6" stroke="#666" stroke-width="0.7" opacity="1"/><path d="M83.6,14.3H98.5" stroke="#666" stroke-width="0.7" opacity="1"/><path d="M62.6,16.2H76.9" stroke="#666" stroke-width="0.7" opacity="1"/><path d="M83.6,16.2H100.0" stroke="#666" stroke-width="0.7" opacity="1"/><path d="M62.6,18.2H81.2" stroke="#666" stroke-width="0.7" opacity="1"/><path d="M83.6,18.2H102.4" stroke="#666" stroke-width="0.7" opacity="1"/><path d="M83.6,20.1H102.2" stroke="#666" stroke-width="0.7" opacity="1"/><path d="M51.1,22.4H104.1" stroke="#c8c8c8" stroke-width="0.35" opacity="1"/><path d="M51.6,24.0H59.1" stroke="#444" stroke-width="0.8" opacity="1"/><path d="M62.6,24.0H77.7" stroke="#666" stroke-width="0.7" opacity="1"/><path d="M83.6,24.0H100.8" stroke="#666" stroke-width="0.7" opacity="1"/><path d="M62.6,25.9H78.0" stroke="#666" stroke-width="0.7" opacity="1"/><path d="M83.6,25.9H98.6" stroke="#666" stroke-width="0.7" opacity="1"/><path d="M62.6,27.9H77.1" stroke="#666" stroke-width="0.7" opacity="1"/><path d="M83.6,27.9H98.9" stroke="#666" stroke-width="0.7" opacity="1"/><path d="M51.1,30.1H104.1" stroke="#c8c8c8" stroke-width="0.35" opacity="1"/><path d="M51.6,31.8H59.1" stroke="#444" stroke-width="0.8" opacity="1"/><path d="M62.6,31.8H81.2" stroke="#666" stroke-width="0.7" opacity="1"/><path d="M83.6,31.8H102.6" stroke="#666" stroke-width="0.7" opacity="1"/><path d="M62.6,33.7H80.6" stroke="#666" stroke-width="0.7" opacity="1"/><path d="M83.6,33.7H102.4" stroke="#666" stroke-width="0.7" opacity="1"/><path d="M62.6,35.6H77.6" stroke="#666" stroke-width="0.7" opacity="1"/><path d="M83.6,35.6H99.5" stroke="#666" stroke-width="0.7" opacity="1"/><path d="M51.1,37.9H104.1" stroke="#c8c8c8" stroke-width="0.35" opacity="1"/><path d="M51.6,39.5H59.1" stroke="#444" stroke-width="0.8" opacity="1"/><path d="M62.6,39.5H79.7" stroke="#666" stroke-width="0.7" opacity="1"/><path d="M83.6,39.5H102.0" stroke="#666" stroke-width="0.7" opacity="1"/><path d="M62.6,41.5H80.9" stroke="#666" stroke-width="0.7" opacity="1"/><path d="M83.6,41.5H102.9" stroke="#666" stroke-width="0.7" opacity="1"/><path d="M62.6,43.4H77.0" stroke="#666" stroke-width="0.7" opacity="1"/><path d="M83.6,43.4H101.2" stroke="#666" stroke-width="0.7" opacity="1"/><path d="M51.1,45.6H104.1" stroke="#c8c8c8" stroke-width="0.35" opacity="1"/><path d="M51.6,47.2H59.1" stroke="#444" stroke-width="0.8" opacity="1"/><path d="M62.6,47.2H80.0" stroke="#666" stroke-width="0.7" opacity="1"/><path d="M83.6,47.2H100.6" stroke="#666" stroke-width="0.7" opacity="1"/><path d="M62.6,49.2H77.5" stroke="#666" stroke-width="0.7" opacity="1"/><path d="M83.6,49.2H100.4" stroke="#666" stroke-width="0.7" opacity="1"/><path d="M62.6,51.1H77.0" stroke="#666" stroke-width="0.7" opacity="1"/><path d="M83.6,51.1H103.2" stroke="#666" stroke-width="0.7" opacity="1"/><path d="M51.1,53.4H104.1" stroke="#c8c8c8" stroke-width="0.35" opacity="1"/><path d="M51.6,55.0H59.1" stroke="#444" stroke-width="0.8" opacity="1"/><path d="M62.6,55.0H80.9" stroke="#666" stroke-width="0.7" opacity="1"/><path d="M83.6,55.0H100.9" stroke="#666" stroke-width="0.7" opacity="1"/><path d="M62.6,57.0H78.1" stroke="#666" stroke-width="0.7" opacity="1"/><path d="M83.6,57.0H103.1" stroke="#666" stroke-width="0.7" opacity="1"/><path d="M62.6,58.9H79.5" stroke="#666" stroke-width="0.7" opacity="1"/><path d="M83.6,58.9H102.9" stroke="#666" stroke-width="0.7" opacity="1"/><path d="M51.1,61.1H104.1" stroke="#c8c8c8" stroke-width="0.35" opacity="1"/><path d="M51.6,62.8H59.1" stroke="#444" stroke-width="0.8" opacity="1"/><path d="M62.6,62.8H80.8" stroke="#666" stroke-width="0.7" opacity="1"/><path d="M83.6,62.8H100.7" stroke="#666" stroke-width="0.7" opacity="1"/><path d="M62.6,64.7H78.7" stroke="#666" stroke-width="0.7" opacity="1"/><path d="M83.6,64.7H101.2" stroke="#666" stroke-width="0.7" opacity="1"/><path d="M62.6,66.7H78.8" stroke="#666" stroke-width="0.7" opacity="1"/><path d="M83.6,66.7H98.6" stroke="#666" stroke-width="0.7" opacity="1"/><path d="M62.6,68.6H78.1" stroke="#666" stroke-width="0.7" opacity="1"/><path d="M83.6,68.6H102.5" stroke="#666" stroke-width="0.7" opacity="1"/><path d="M62.6,70.5H76.8" stroke="#666" stroke-width="0.7" opacity="1"/><path d="M51.1,72.8H104.1" stroke="#c8c8c8" stroke-width="0.35" opacity="1"/><path d="M51.6,74.4H59.1" stroke="#444" stroke-width="0.8" opacity="1"/><path d="M62.6,74.4H76.8" stroke="#666" stroke-width="0.7" opacity="1"/><path d="M83.6,74.4H101.4" stroke="#666" stroke-width="0.7" opacity="1"/><path d="M62.6,76.4H78.0" stroke="#666" stroke-width="0.7" opacity="1"/><path d="M83.6,76.4H100.8" stroke="#666" stroke-width="0.7" opacity="1"/><path d="M51.1,80.6H104.1" stroke="#c8c8c8" stroke-width="0.35" opacity="1"/><path d="M61.9,1V86.500M82.8,1V86.500" stroke="#c8c8c8" stroke-width="0.35"/></g></svg>
<!--THUMBS_END-->
<!--SLIDE_START-->
<svg id="mainsvg" style="left:231px;top:143px;overflow:hidden" width="1025" height="665" viewBox="231 143 1025 665">
<defs>
<linearGradient id="plank" x1="0" y1="0" x2="0" y2="1">
<stop offset="0" stop-color="#ececec" stop-opacity="0"/><stop offset="0.45" stop-color="#ececec" stop-opacity=".75"/><stop offset="0.6" stop-color="#f4f4f4" stop-opacity=".7"/><stop offset="1" stop-color="#f6f6f6" stop-opacity="0"/>
</linearGradient>
<filter id="halo" x="-10%" y="-10%" width="120%" height="120%"><feGaussianBlur stdDeviation="1.3"/></filter>
<filter id="wood" x="0" y="0" width="100%" height="100%" filterUnits="objectBoundingBox"><feTurbulence type="fractalNoise" baseFrequency="0.003 0.11" numOctaves="3" seed="8"/><feColorMatrix type="matrix" values="0 0 0 0 0.915  0 0 0 0 0.915  0 0 0 0 0.915  1.25 0 0 0 -0.45"/></filter>
<filter id="soft" x="-5%" y="-50%" width="110%" height="200%"><feGaussianBlur stdDeviation="6 1.2"/></filter>
<g id="sbgfill">
<rect x="241" y="192" width="1006" height="566" fill="#fdfdfd"/>
<g fill="url(#plank)">
<rect x="241" y="237" width="1006" height="7"/>
<rect x="241" y="353" width="1006" height="7" opacity=".6"/>
<rect x="241" y="468" width="1006" height="7"/>
<rect x="241" y="582" width="1006" height="7"/>
<rect x="241" y="698" width="1006" height="7"/>
</g>
<rect x="241" y="192" width="1006" height="566" filter="url(#wood)"/>
</g>
<g id="sbgthumb"><rect x="241" y="192" width="1006" height="566" fill="#fdfdfd"/><path d="M241,240H1247M241,471H1247M241,585H1247M241,700H1247" stroke="#f0f0f0" stroke-width="5" fill="none"/></g>
<g id="decoUnder" fill="none" stroke="#bd9c5e" stroke-linecap="round">
<path d="M985.5,187.7 C978,196 969,205 967,212 C965,219 967,224 974,228 C988,235 1003,239 1018,245 C1031,250 1044,254 1057,259 C1066,263 1076,266 1085.5,267.5 C1093,269 1101,269.3 1109,269 C1118,268.7 1126,268 1135,267 C1143,266 1150,265 1158.3,263.6 C1190,260 1225,258 1258,257.8"/>
<path d="M236,586.6 C242,590.5 248,594.5 254.8,598.1 C263,602.5 272,606 281.6,608.8 C292,612 303,614.5 313.7,618.2 C323,621.5 332,629 340.5,635.6 C350,643 361,647 372.7,651.7 C390,659 410,668 426.2,680 C431,688 436,699 441.5,708.5 C446,716 455,721.5 463,726.5 C472,732 479,738 485.2,745 C490,751 497,760 503.4,768.8"/>
</g>
<g id="decoBlob1" fill="#c5d8d0">
<path d="M1023,192 C1040,198 1062,205 1069,212 C1066,217 1052,217 1048,221 C1060,228 1080,233 1096,238 C1120,247 1140,255 1161,263 C1178,270 1190,276 1200,282.5 C1207,288 1211,292 1215.5,294 C1222,298 1235,301 1247,303 L1247,192 Z"/>
<path d="M241,635.6 C255,632 268,629.5 281.6,629.5 C291,629.5 300,631.5 308.4,634.3 C320,638 330,642 340.5,645 C350,648 358,650.5 367.3,651.7 C378,653 388,652.5 398.1,653 C402,659 406,664.5 410.2,669.1 C415,673.5 421,676.5 426.2,679.3 C423,682.5 420,685 418.2,687.9 C415.5,695 415,702 415.5,709.3 C416,719 419,728 420.9,736.1 C422,743 422,750 420.3,754.8 C420,756.5 419,757.5 418.2,758 L241,758 Z"/>
</g>
<g id="decoMid" fill="none" stroke="#bd9c5e" stroke-linecap="round">
<path d="M232,598.1 C238,609 245,619 252.1,628.9 C260,639 268,648 276.2,656.3 C290,670 310,684 325.8,687.1 C336,689 347,689.5 356.6,691.9 C366,694.5 375,698.5 383.4,703.9 C393,710 402,717.5 410.2,725.4 C420,735 429,745 436.9,754.8 C444,763 452,771 461.1,778.4"/>
</g>
<g id="decoBlob2" fill="#dde8e3">
<path d="M1140,192 C1150,197 1157,202 1161,208.5 C1166,215 1169,221 1174,228 C1180,237 1186,245 1195,251.5 C1204,258 1213,262 1223,265.5 C1232,269 1240,273 1247,276.6 L1247,192 Z"/>
<path d="M241,661.1 C250,659 259,657.8 268.2,657.1 C281,656 295,655.5 308.4,656.3 C315,657 320,659 323.1,662.4 C326.5,666 327.5,671 327.1,677.2 C326.5,685 324,691 323.9,698.6 C323.8,706 323.5,714 325.8,720 C328.5,727 334,732 340.5,736.1 C347,740.5 354,745 361.9,749.5 C367,752.5 372,755.5 378,758 L241,758 Z"/>
</g>
<g id="decoTop" fill="none" stroke="#bd9c5e" stroke-linecap="round">
<path d="M1111.5,167.7 C1113,175 1116,182 1119.3,189 C1122,195 1127,201 1132.3,206 C1137,211 1143,215 1150.5,217 C1156,219 1162,219.7 1168.7,220.2 C1176,220.8 1182,221 1189.5,221.5 C1197,222 1205,222.5 1213,224 C1219,225.2 1225,227 1231,229.3 C1237,232 1242,235.5 1246.6,239.7 C1250,243 1253,246.5 1257,251"/>
</g>
<g id="deco"><use href="#decoUnder"/><use href="#decoBlob1"/><use href="#decoMid"/><use href="#decoBlob2"/><use href="#decoTop"/></g>
<g id="dots"><circle cx="296.6" cy="242.6" r="10.5" fill="#bca270"/><circle cx="296.6" cy="265.7" r="10.5" fill="#c5d8d0"/></g>
<g id="s2shapes">
<circle cx="456" cy="407.4" r="105.5" fill="#fff" filter="url(#halo)"/>
<circle cx="456" cy="407.4" r="100.7" fill="#f2f2f2"/>
<circle cx="484.7" cy="588.2" r="106.3" fill="#fff" filter="url(#halo)"/>
<circle cx="484.7" cy="588.2" r="101.5" fill="#cebd96"/>
<circle cx="630.5" cy="471" r="106.3" fill="#fff" filter="url(#halo)"/>
<circle cx="630.5" cy="471" r="101.5" fill="#6a8d7b"/>
<rect x="781" y="344.9" width="189.5" height="29" rx="4.5" fill="#6a8d7b"/>
<rect x="781" y="466.6" width="189.5" height="29" rx="4.5" fill="#cbb48a"/>
<rect x="781" y="576.3" width="189.5" height="28.8" rx="4.5" fill="#f1f1f1"/>
</g>
<symbol id="sl" viewBox="241 192 1006 566"><g stroke-width="4.5"><use href="#sbgthumb"/><use href="#deco"/><use href="#dots"/></g></symbol>
<symbol id="sl0" viewBox="241 192 1006 566" stroke-width="2.4"><use href="#sbgthumb"/><g transform="translate(1247,192) scale(2.0,2.0) translate(-1247,-192)"><use href="#deco"/></g><g transform="translate(241,758) scale(1.83,1.8) translate(-241,-758)"><use href="#deco"/></g></symbol>
<symbol id="sl6" viewBox="241 192 1006 566" stroke-width="4"><use href="#sbgthumb"/><g transform="translate(1247,192) scale(1.3,1.3) translate(-1247,-192)"><use href="#deco"/></g><use href="#deco"/><use href="#dots"/></symbol>
<symbol id="sl2" viewBox="241 192 1006 566" stroke-width="4.5"><use href="#sbgthumb"/><use href="#deco"/><use href="#dots"/><use href="#s2shapes"/></symbol>
</defs>
<g stroke-width="1.9"><use href="#sbgfill"/><use href="#deco"/><use href="#dots"/><use href="#s2shapes"/></g>
<!-- small underline bars -->
<rect x="445" y="389.3" width="21.5" height="2.8" fill="#222"/>
<rect x="620.4" y="453.4" width="21.8" height="2.8" fill="#fff"/>
<rect x="476.2" y="569.2" width="20.6" height="2.8" fill="#fff"/>
<rect x="406" y="585.2" width="65" height="0.8" fill="#fff" opacity=".85"/>
<g>
<!-- sparkle cursor -->
<path d="M631.600,323.200L634.600,326.600L636.200,325.300L636.600,328.300L640.800,327.400L638.400,330.200L640.600,332.200L637.200,332.300L636.400,334.200L634.800,332.400L633,333.600L633.700,330.800L631.800,329.400L634,328.600Z" fill="#fff" stroke="#333" stroke-width="0.9" stroke-linejoin="round"/>
<!-- chibi -->
<path d="M641.400,346.500C641,343 644,341.500 648.500,341.500C653,341.500 655.600,343.200 655.200,346.800C654,349.600 643,349.800 641.400,346.500Z" fill="#2a2a2a"/>
<rect x="643.600" y="343.800" width="3.200" height="4.400" rx="0.800" fill="#e8a040"/>
<path d="M650.500,343.500L653.500,342.500L654.500,347L651.500,348Z" fill="#9a6b3c"/>
<ellipse cx="648.400" cy="338.600" rx="6" ry="4.600" fill="#f3d3c3"/>
<path d="M641.200,339.500C640.600,334.500 642,331 643,329.200L645.600,331.400C646.600,330.800 647.400,330.600 648,330.600L648,328.600C648.600,327.400 651.400,327.400 652,328.600L652,330.800C652.600,330.900 653.200,331.100 653.800,331.500L656.400,329.400C657,332 656.600,336 655.400,339.800C654.600,337 652.400,335.600 650,335.200C648,336.600 645.400,337 643.800,336.400C642.800,337.200 642,338.200 641.200,339.500Z" fill="#2b2b2b"/>
<circle cx="645.800" cy="339.200" r="0.700" fill="#5a3a2a"/><circle cx="650.800" cy="339.200" r="0.700" fill="#5a3a2a"/>
</g>
</svg>
<!-- slide text -->
<div class="t ns" style="left:422px;top:368.6px;font-size:17px;font-weight:bold;line-height:18px;height:18px;color:#222">联考时间</div>
<div class="t ns" style="left:410px;top:407px;font-size:12.6px;line-height:14px;height:14px;color:#333">笔试：3月30日</div>
<div class="t ns" style="left:423.5px;top:430px;font-size:12.6px;line-height:14px;height:14px;color:#333">面试：5月</div>
<div class="t w ns" style="left:597.5px;top:432px;font-size:17px;font-weight:bold;line-height:18px;height:18px">考试题型</div>
<div class="t w ns" style="left:580.8px;top:473px;font-size:12.5px;line-height:14px;height:14px">职业能力倾向测试</div>
<div class="t w ns" style="left:593px;top:496px;font-size:12.5px;line-height:14px;height:14px">综合应用能力</div>
<div class="t w ns" style="left:584.5px;top:518.5px;font-size:12.5px;line-height:14px;height:14px">（ABCDE五类）</div>
<div class="t w ns" style="left:452.8px;top:548.5px;font-size:17px;font-weight:bold;line-height:18px;height:18px">考试时间</div>
<div class="t ns" style="left:407.4px;top:589px;font-size:11.37px;color:#1c1c1c;-webkit-text-stroke:0.2px #1c1c1c;text-shadow:0 0 1px #fff,0 0 1.5px #fff">08:30－10:00 职业能力倾向测验</div>
<div class="t ns" style="left:407.4px;top:603.4px;font-size:11.3px;color:#1c1c1c;-webkit-text-stroke:0.2px #1c1c1c;text-shadow:0 0 1px #fff,0 0 1.5px #fff;letter-spacing:-0.02px">10:00－12:00 综合应用能力</div>
<div class="t w ns" style="left:860.4px;top:350.4px;font-size:18.3px;font-weight:bold;line-height:20px;height:20px">A类</div>
<div class="st" style="left:789.4px;top:385.6px">行政性、事务性和业务管理为主的岗位</div>
<div class="st" style="left:789.6px;top:412.2px;font-size:14.9px">（高校行政、辅导员）</div>
<div class="t w ns" style="left:860.4px;top:471.7px;font-size:18.3px;font-weight:bold;line-height:20px;height:20px">B类</div>
<div class="st" style="left:782.3px;top:507.6px">人文社科类专业技术岗位</div>
<div class="st" style="left:782.8px;top:534.2px;font-size:14.9px">（大专等专任教师）</div>
<div class="t ns" style="left:860.4px;top:581.6px;font-size:18.3px;font-weight:bold;line-height:20px;height:20px;color:#333">D类</div>
<div class="st" style="left:782.9px;top:617.3px">中小学和中专等教育机构的教师岗位</div>
<!--SLIDE_END-->
<!--SCROLL_START-->
<svg style="left:8px;top:143px" width="1262" height="685" viewBox="8 143 1262 685">
<g stroke="#ababab" stroke-width="1" fill="#fff">
<rect x="213.500" y="143.500" width="14" height="682"/>
<path d="M213.500,157.500H227.500M213.500,811.500H227.500" fill="none"/>
</g>
<path d="M217.100,152.400L220.500,148.800L223.900,152.400Z" fill="#222"/><path d="M217.100,816.600L220.500,820.200L223.900,816.600Z" fill="#222"/>
<path d="M230.500,143V828" stroke="#c6c6c6" stroke-width="1"/>
<rect x="1256" y="143" width="14" height="665" fill="#f0f0f0"/>
<rect x="231" y="808" width="1025" height="14.500" fill="#f0f0f0"/>
<g stroke="#ababab" stroke-width="1" fill="#fff">
<rect x="1256.500" y="144.500" width="14" height="13"/>
<rect x="1256.500" y="258.500" width="14" height="100"/>
<rect x="1256.500" y="762.500" width="14" height="14"/>
<rect x="232.500" y="808.500" width="14" height="14"/>
<rect x="255.500" y="808.500" width="949.500" height="14"/>
<rect x="1241.500" y="808.500" width="14" height="14"/>
</g>
<rect x="1256" y="777.500" width="14" height="30.500" fill="#e6e6e6"/>
<rect x="1256" y="808" width="14" height="20" fill="#e6e6e6"/>
<path d="M1260,153.200L1263.400,149.600L1266.800,153.200Z" fill="#222"/><path d="M1260,767.800L1263.400,771.400L1266.800,767.800Z" fill="#222"/>
<path d="M241.800,812L238.200,815.400L241.800,818.800Z" fill="#222"/><path d="M1246.800,812L1250.400,815.400L1246.800,818.800Z" fill="#222"/>
<g fill="#5f5f5f"><path d="M1259,785L1263.500,779.500L1268,785Z"/><path d="M1259,790.400L1263.500,784.900L1268,790.400Z"/><path d="M1259,795.200L1263.500,800.700L1268,795.200Z"/><path d="M1259,800.400L1263.500,805.900L1268,800.400Z"/></g>
<rect x="8" y="822.500" width="1262" height="5.500" fill="#e6e6e6"/>
<rect x="8" y="825.500" width="1262" height="2.500" fill="#dedede"/>
</svg>
<!--SCROLL_END-->
<!--STATUS_START-->
<div class="t ns" style="left:18.200px;top:832px;color:#555;font-size:10.700px">幻灯片 第 2 张，共 6 张</div>
<div class="t ns" style="left:172.700px;top:832px;color:#444;font-size:10.300px">英语(美国)</div>
<div class="t" style="left:250.900px;top:832px;color:#333;font-size:10.500px;font-weight:bold">辅助功能: 调查</div>
<div class="t ns" style="left:859.500px;top:831.300px;color:#444">备注</div>
<div class="t ns" style="left:912px;top:831.300px;color:#444">批注</div>
<div class="t ns" style="left:1215.400px;top:831.600px;color:#444;font-size:11px">90%</div>
<svg style="left:8px;top:828px" width="1262" height="19" viewBox="8 828 1262 19">
<rect x="949.700" y="828" width="35" height="19" fill="#c8c8c8"/>
<g fill="none" stroke="#7d7d7d" stroke-width="0.9">
<path d="M146.500,832.500H150.500V841.500H146.500ZM152,832.500H156.500V841.500H152Z" stroke="#8a8a8a"/><path d="M153,837.500L154.200,839L156.200,835.600" stroke-width="0.8"/>
<path d="M243.200,841.300C239.800,842.300 236.300,839.900 236.300,836.200C236.300,833.200 238.700,830.900 241.600,830.900C243.300,830.900 244.800,831.700 245.800,832.900"/><path d="M241.500,833V836.600H244.600"/><path d="M243.600,838.300L248.600,843.600M248.600,838.300L243.600,843.600" stroke="#444" stroke-width="1.200"/>
<path d="M846.500,838.500H854.500M846.500,841H854.500M848.500,836L850.500,833.600L852.500,836" />
<rect x="961.500" y="831.500" width="11.500" height="10.500"/><rect x="964" y="834" width="6.500" height="5.500"/><path d="M961.500,834H964M961.500,836.700H964M961.500,839.400H964" stroke-width="0.7"/>
<rect x="997" y="832" width="4" height="4"/><rect x="1003.500" y="832" width="4" height="4"/><rect x="997" y="838.500" width="4" height="4"/><rect x="1003.500" y="838.500" width="4" height="4"/>
<path d="M1037.400,833.600V842M1037.400,833.600C1035.500,832.300 1033.500,832.300 1032,832.800V841C1033.500,840.500 1035.500,840.600 1037.400,842C1039.300,840.600 1041.300,840.500 1042.800,841V832.800C1041.300,832.300 1039.300,832.300 1037.400,833.600Z"/><path d="M1033.600,835H1035.800M1033.600,837H1035.800M1039,835H1041.200M1039,837H1041.200" stroke-width="0.6"/>
<path d="M1066,832.200H1078M1067.200,832.200V838.800H1076.800V832.200M1072,838.800V842.400M1069.400,842.600H1074.600"/>
<path d="M1094.800,836.800H1100" stroke="#888"/><path d="M1106.700,836.800H1192.500" stroke="#555" stroke-width="1"/><path d="M1198,836.800H1203.600M1200.800,834V839.600" stroke="#888"/>
<rect x="1257.500" y="832.300" width="8.500" height="8.500" stroke="#666"/><path d="M1261.750,832.300V835M1261.750,840.800V838M1257.500,836.500H1260M1266,836.500H1263.500" stroke="#666" stroke-width="0.8"/>
</g>
<rect x="1144" y="831.800" width="3.600" height="10" fill="#444"/>
<path d="M897.500,832H910.500V839.500H903.500L900.800,842.200V839.500H897.500Z" fill="#444"/>
</svg>
<!--STATUS_END-->
</div>
</body>
</html>
